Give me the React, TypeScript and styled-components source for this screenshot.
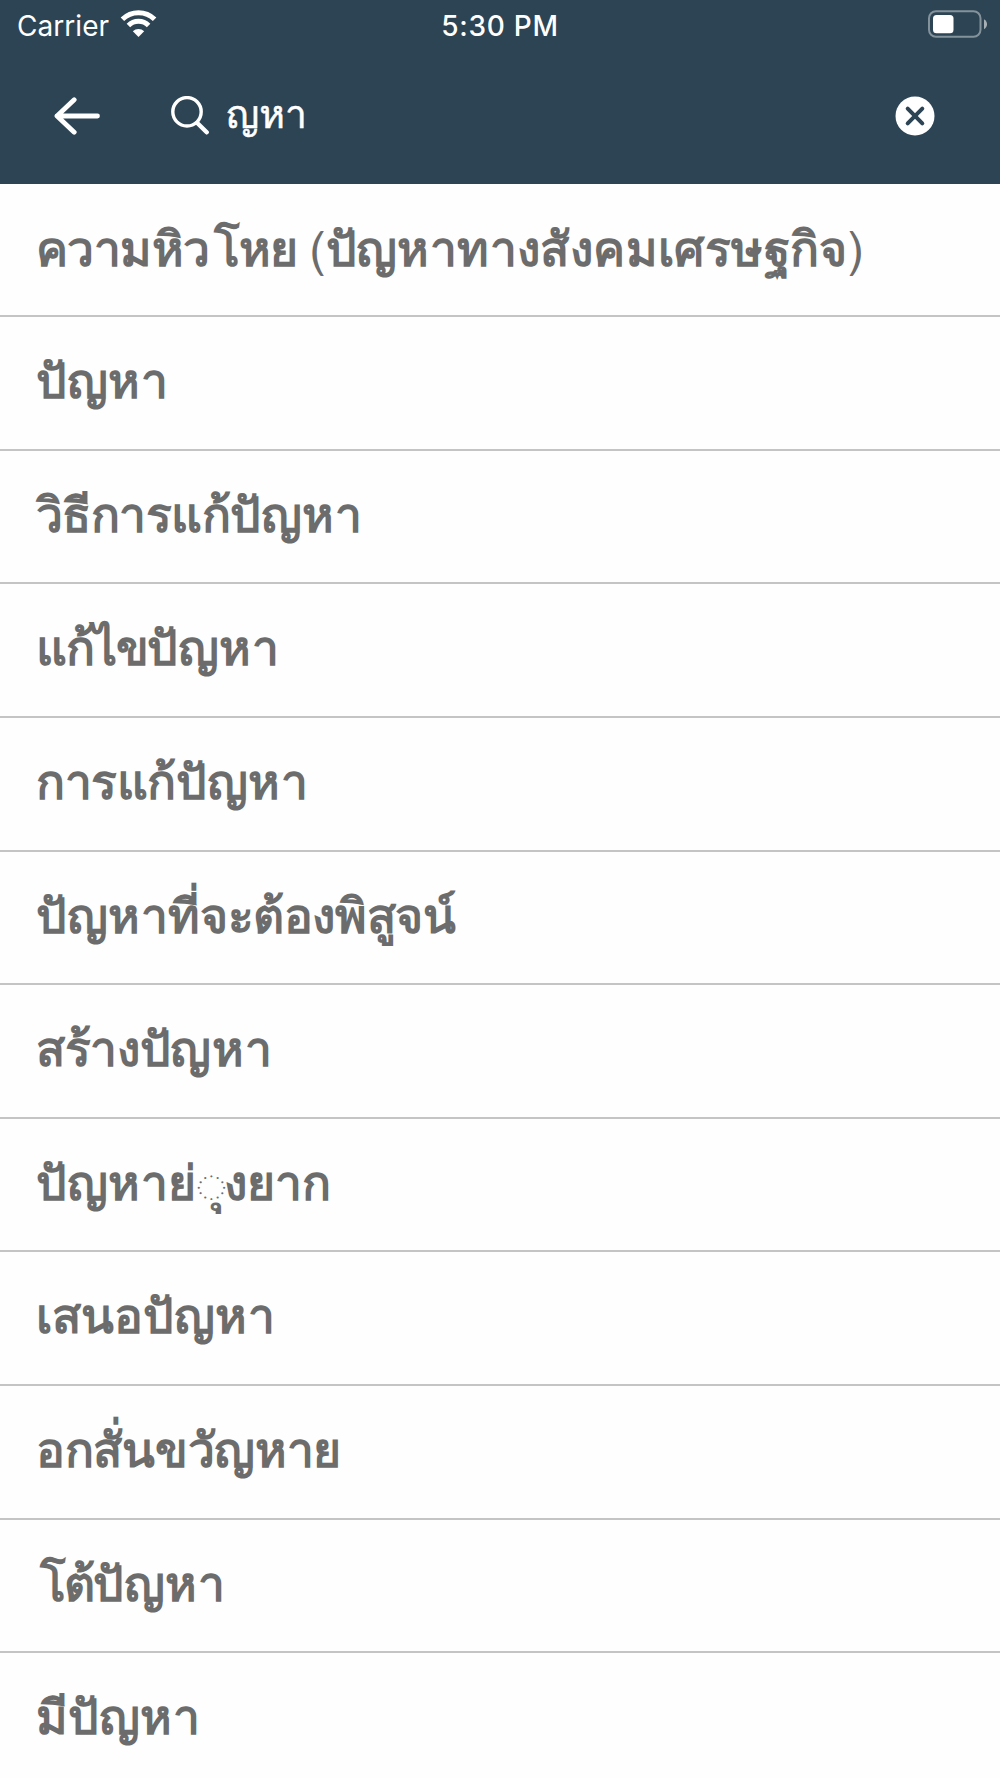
import React from "react";
import styled, { createGlobalStyle } from "styled-components";

const Global = createGlobalStyle`
  body { margin: 0; background: #fff; overflow: hidden; }
`;

const Screen = styled.main`
  width: 1000px;
  height: 1778px;
  overflow: hidden;
  background: #fefefe;
`;

const Header = styled.header`
  box-sizing: border-box;
  height: 183.7px;
  background: #2c4454;
  color: #fff;
`;

const StatusBar = styled.div`
  display: grid;
  grid-template-columns: 1fr auto 1fr;
  align-items: center;
  height: 50px;
  padding: 0 13px 0 17px;
  font-family: Inter, "Liberation Sans", sans-serif;
`;

const Carrier = styled.div`
  display: flex;
  align-items: center;
  gap: 11px;
  padding-top: 1px;
  font-size: 28px;
  letter-spacing: 0.05px;

  svg { margin-top: -3px; }
`;

const Clock = styled.time`
  margin-right: 4px;
  padding-top: 1px;
  font-size: 28px;
  font-weight: 500;
  letter-spacing: 0.75px;
`;

const BatterySlot = styled.div`
  display: flex;
  justify-content: flex-end;
  margin-top: -2px;
`;

const SearchBar = styled.div`
  display: flex;
  align-items: center;
  height: 131px;
  padding: 0 65px 0 53px;
`;

const IconButton = styled.button`
  display: flex;
  padding: 0;
  border: 0;
  background: none;
  color: inherit;
`;

const SearchField = styled.div`
  display: flex;
  flex: 1;
  align-items: center;
  gap: 16px;
  margin-left: 70px;
`;

const Query = styled.span`
  margin-top: -4px;
  font-family: Loma, "Noto Sans Thai Looped", sans-serif;
  font-size: 39px;
  line-height: 60px;
  -webkit-text-stroke: 0.5px #fff;
`;

const List = styled.ul`
  margin: 0;
  padding: 0;
  list-style: none;
`;

const Row = styled.li`
  box-sizing: border-box;
  height: 133.6px;
  padding: 0 36px;
  border-bottom: 2px solid #c4c4c4;
  color: #6c6c6c;
  font-family: "Liberation Sans", sans-serif;
  font-size: 48px;
  font-weight: 700;
  line-height: 130px;
  white-space: nowrap;
`;

const Piece = styled.span<{ $track?: number; $shift?: number }>`
  margin-left: ${(p) => p.$shift ?? 0}px;
  letter-spacing: ${(p) => p.$track ?? 0}px;
`;

const Light = styled.span`
  font-family: Loma, sans-serif;
  font-weight: 400;
`;

const Circle = styled.span`
  margin-right: -2px;
  font-family: "Noto Sans Thai Looped", "DejaVu Sans", sans-serif;
  font-size: 46px;
  font-weight: 600;
  line-height: 1;
`;

const Problem = () => <Piece $track={0.6}>ปัญหา</Piece>;

const words: React.ReactNode[] = [
  <>
    <Piece $track={-0.6}>ความหิว</Piece>
    <Piece $shift={5} $track={-1.4}>โหย</Piece> <Light>(</Light>
    <Piece $track={0.4}>ปัญหาทางสังคมเศรษฐกิจ</Piece>
    <Light>)</Light>
  </>,
  <Problem />,
  <><Piece $track={-0.55}>วิธีการแก้</Piece><Problem /></>,
  <><Piece $track={-1.5}>แก้ไข</Piece><Problem /></>,
  <><Piece $track={-0.4}>การแก้</Piece><Problem /></>,
  <><Problem /><Piece $track={-0.4}>ที่จะต้องพิสูจน์</Piece></>,
  <><Piece $track={-0.3}>สร้าง</Piece><Problem /></>,
  <><Problem />ย่<Circle>◌ุ</Circle>งยาก</>,
  <>เสนอ<Problem /></>,
  <Piece $track={-0.3}>อกสั่นขวัญหาย</Piece>,
  <><Piece $shift={4} $track={-2}>โต้</Piece><Problem /></>,
  <>มี<Problem /></>,
];

function WifiIcon() {
  return (
    <svg width="37" height="28" viewBox="0 0 37 28" fill="none">
      <path d="M2.4 9.2A23 23 0 0 1 34.6 9.2" stroke="#fff" strokeWidth="5" />
      <path d="M8.4 15.5A14.4 14.4 0 0 1 28.6 15.5" stroke="#fff" strokeWidth="5" />
      <path d="M12.8 21.3A8.3 8.3 0 0 1 24.2 21.3L18.5 27Z" fill="#fff" />
    </svg>
  );
}

function BatteryIcon() {
  return (
    <svg width="59" height="28" viewBox="0 0 59 28">
      <rect x="1" y="1.2" width="51.5" height="25.6" rx="7" fill="none" stroke="#84929b" strokeWidth="2" />
      <rect x="5" y="5" width="20.5" height="18.3" rx="3.5" fill="#fff" />
      <path d="M56 9.3C60 11.5 60 17 56 19.3Z" fill="#a5afb5" />
    </svg>
  );
}

function BackIcon() {
  return (
    <svg width="48" height="38" viewBox="0 0 48 38" fill="none" stroke="#fff" strokeWidth="4.8" strokeLinecap="round" strokeLinejoin="round">
      <path d="M44.5 19H4M21.2 2.8L4 19l17.2 16.2" />
    </svg>
  );
}

function SearchIcon() {
  return (
    <svg width="39" height="39" viewBox="0 0 39 39" fill="none" stroke="#fff">
      <circle cx="16" cy="15.8" r="14.2" strokeWidth="3.4" />
      <path d="M26.3 27L35.7 36.3" strokeWidth="4.4" strokeLinecap="round" />
    </svg>
  );
}

function ClearIcon() {
  return (
    <svg width="40" height="40" viewBox="0 0 40 40">
      <circle cx="20" cy="20" r="19.5" fill="#fff" />
      <path d="M12.7 12.7l14.6 14.6M27.3 12.7l-14.6 14.6" stroke="#2c4454" strokeWidth="4" strokeLinecap="round" />
    </svg>
  );
}

export default function App() {
  return (
    <Screen>
      <Global />
      <Header>
        <StatusBar>
          <Carrier>Carrier<WifiIcon /></Carrier>
          <Clock>5:30 PM</Clock>
          <BatterySlot><BatteryIcon /></BatterySlot>
        </StatusBar>
        <SearchBar>
          <IconButton aria-label="Back"><BackIcon /></IconButton>
          <SearchField>
            <SearchIcon />
            <Query>ญหา</Query>
          </SearchField>
          <IconButton aria-label="Clear"><ClearIcon /></IconButton>
        </SearchBar>
      </Header>
      <List>
        {words.map((word, i) => <Row key={i}>{word}</Row>)}
      </List>
    </Screen>
  );
}
